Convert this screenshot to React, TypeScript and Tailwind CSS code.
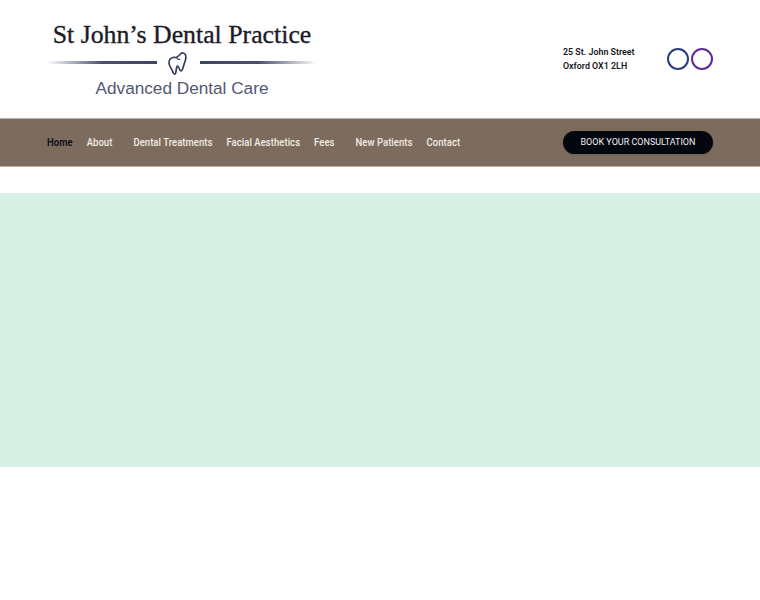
import React from 'react';

const navItems = [
  { label: 'Home', className: 'text-[#0b0d17] font-semibold mr-[14px]' },
  { label: 'About', className: 'text-[#f1ece6] mr-[21px]' },
  { label: 'Dental Treatments', className: 'text-[#f1ece6] mr-[14px]' },
  { label: 'Facial Aesthetics', className: 'text-[#f1ece6] mr-[14px]' },
  { label: 'Fees', className: 'text-[#f1ece6] mr-[21px]' },
  { label: 'New Patients', className: 'text-[#f1ece6] mr-[14px]' },
  { label: 'Contact', className: 'text-[#f1ece6]' },
];

const Logo: React.FC = () => (
  <div className="flex w-[270px] flex-col items-center">
    <div className="whitespace-nowrap pt-[1px] font-['Liberation_Serif',serif] text-[25.8px] leading-[30px] text-[#1b1c26] [-webkit-text-stroke:0.35px_#1b1c26]">
      St John’s Dental Practice
    </div>
    <div className="flex h-[24px] w-full items-center">
      <div className="h-[3px] w-[110px] bg-gradient-to-r from-transparent via-[#4a5272] to-[#3d4566]" />
      <svg width="43" height="26" viewBox="0 0 43 26" fill="none" className="-my-[1px] shrink-0">
        <path
          d="M16 8.5C13.5 9 12 11.5 12 14c0 3 2 4.500 3 7 .8 2 1.500 4.500 3 4 1.500-.5.8-7 2.500-8 1.500-.5 1.700 5.500 3.500 5 1.800-.5 2.500-5.500 3.500-8 1-2.500 2-5.500 1-8-1-2.500-3.500-2.500-5-1-1.500 1.500-3.500 3.500-5 3.500-1 0-1.500-.2-2.500 0z"
          stroke="#343c5e"
          strokeWidth="1.7"
          strokeLinejoin="round"
        />
        <path d="M19.5 8.500c.6 1.300 1.800 2 3.200 1.900" stroke="#343c5e" strokeWidth="1.200" strokeLinecap="round" />
      </svg>
      <div className="h-[3px] flex-1 bg-gradient-to-l from-transparent via-[#4a5272] to-[#3d4566]" />
    </div>
    <div className="mt-[3px] whitespace-nowrap font-['Liberation_Sans',sans-serif] text-[17.2px] leading-[22px] text-[#505872]">
      Advanced Dental Care
    </div>
  </div>
);

export default function App() {
  return (
    <div className="min-h-[600px] bg-white font-['Roboto',sans-serif]">
      <header className="flex h-[118px] items-center pl-[47px] pr-[47px]">
        <Logo />
        <div className="ml-auto w-[104px] text-[8.9px] font-semibold leading-[14px] text-[#16161c]">
          <div className="scale-y-110">25 St. John Street</div>
          <div className="scale-y-110">Oxford OX1 2LH</div>
        </div>
        <div className="flex gap-[2px]">
          <div className="h-[22px] w-[22px] rounded-full border-2 border-[#2c3c80]" />
          <div className="h-[22px] w-[22px] rounded-full border-2 border-[#5d2a9a]" />
        </div>
      </header>

      <nav className="flex h-[49px] items-center border-y border-[#bdb1a6] bg-[#7d6c5e] pl-[47px] pr-[47px]">
        <div className="mt-[1px] flex scale-y-110 items-center text-[9.5px] font-medium tracking-[0.05px]">
          {navItems.map(item => (
            <span key={item.label} className={`whitespace-nowrap ${item.className}`}>
              {item.label}
            </span>
          ))}
        </div>
        <button className="ml-auto h-[23px] w-[150px] rounded-full bg-[#05070f] pt-[1px] text-center text-[9px] text-[#eef0f4] shadow-sm">
          BOOK YOUR CONSULTATION
        </button>
      </nav>

      <main className="mt-[26px] h-[274px] bg-[#d7f1e7]" />
    </div>
  );
}
